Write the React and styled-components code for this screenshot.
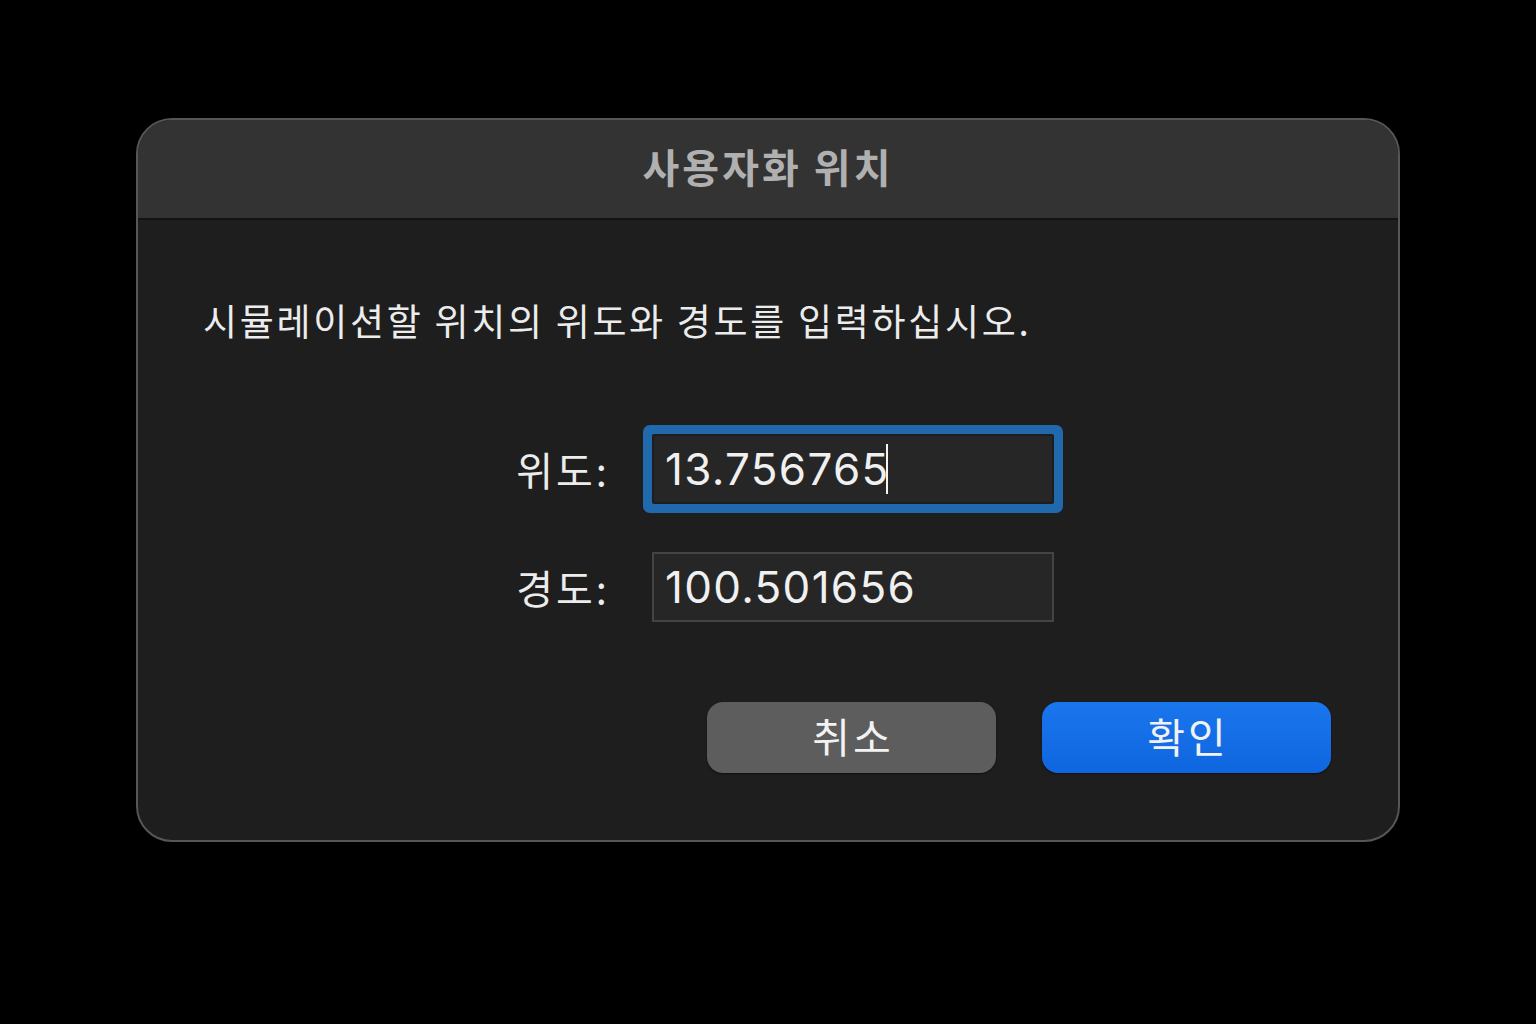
import styled, { createGlobalStyle } from 'styled-components';

const GlobalStyle = createGlobalStyle`
  html, body {
    margin: 0;
    padding: 0;
    background: #000;
  }
  * { box-sizing: border-box; }
`;

const Page = styled.div`
  width: 1536px;
  height: 1024px;
  background: #000;
  padding: 118px 0 0 136px;
  font-family: Inter, "Noto Sans CJK KR", sans-serif;
`;

const Window = styled.div`
  width: 1264px;
  height: 724px;
  border-radius: 36px;
  border: 2px solid #565656;
  background: #1e1e1e;
  overflow: hidden;
  display: flex;
  flex-direction: column;
`;

const TitleBar = styled.div`
  height: 100px;
  flex-shrink: 0;
  background: #333333;
  border-bottom: 2px solid #141414;
  display: flex;
  align-items: center;
  justify-content: center;
  padding-bottom: 6px;
`;

const Title = styled.h1`
  margin: 0;
  font-family: "Noto Sans CJK KR", sans-serif;
  font-size: 40px;
  font-weight: 700;
  color: #b0b0b0;
  letter-spacing: 3px;
`;

const Body = styled.div`
  flex: 1;
  padding: 77px 67px 0 65px;
  display: flex;
  flex-direction: column;
`;

const Message = styled.p`
  margin: 0;
  font-family: "Noto Sans CJK KR", sans-serif;
  font-size: 37px;
  line-height: 46px;
  color: #ececec;
  letter-spacing: 2.7px;
`;

const Form = styled.div`
  margin: 91px 0 0 247px;
  display: grid;
  grid-template-columns: 160px 402px;
  column-gap: 42px;
  row-gap: 48px;
  align-items: center;
`;

const Label = styled.label`
  text-align: right;
  font-family: "Noto Sans CJK KR", sans-serif;
  font-size: 40px;
  color: #ececec;
  letter-spacing: 3px;
`;

const Field = styled.div`
  position: relative;
  height: 70px;
  background: #262626;
  border: 2px solid ${p => (p.$focused ? '#1d1d1d' : '#444444')};
  box-shadow: ${p => (p.$focused ? '0 0 0 9px #2069ad' : 'none')};
  border-radius: ${p => (p.$focused ? '2px' : '0')};
  display: flex;
  align-items: center;
  padding-left: 11px;
  font-family: Inter, "Noto Sans", sans-serif;
  font-size: 44px;
  color: #f0f0f0;
  letter-spacing: 1.3px;
`;

const Caret = styled.span`
  display: inline-block;
  width: 2px;
  height: 50px;
  margin-left: -4px;
  background: #f4f4f4;
  align-self: center;
`;

const Buttons = styled.div`
  margin-top: 80px;
  display: flex;
  justify-content: flex-end;
  gap: 46px;
`;

const Button = styled.button`
  width: 289px;
  height: 71px;
  border: none;
  border-radius: 16px;
  font-family: "Noto Sans CJK KR", sans-serif;
  font-size: 41px;
  letter-spacing: 3px;
  color: #f2f2f2;
  background: ${p => (p.$primary ? 'linear-gradient(#1a76ec, #0f66e0)' : '#5d5d5d')};
  box-shadow: 0 1px 2px rgba(0, 0, 0, 0.5);
  padding: 0 0 6px 3px;
`;

export default function App() {
  return (
    <>
      <GlobalStyle />
      <Page>
        <Window>
          <TitleBar>
            <Title>사용자화 위치</Title>
          </TitleBar>
          <Body>
            <Message>시뮬레이션할 위치의 위도와 경도를 입력하십시오.</Message>
            <Form>
              <Label>위도:</Label>
              <Field $focused>
                13.756765<Caret />
              </Field>
              <Label>경도:</Label>
              <Field>100.501656</Field>
            </Form>
            <Buttons>
              <Button>취소</Button>
              <Button $primary>확인</Button>
            </Buttons>
          </Body>
        </Window>
      </Page>
    </>
  );
}
